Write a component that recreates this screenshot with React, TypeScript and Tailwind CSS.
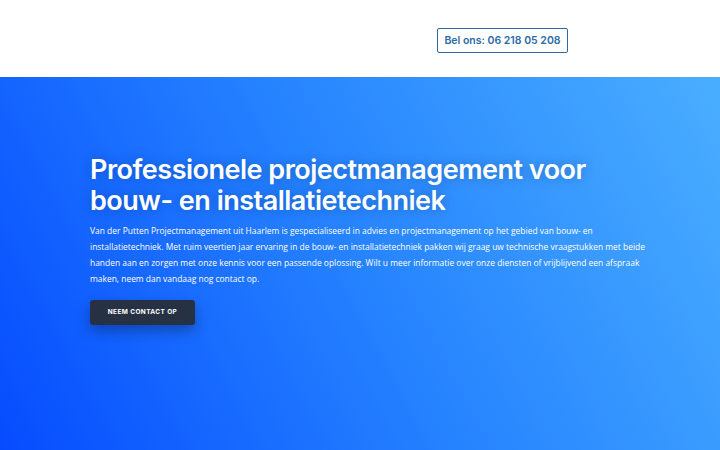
export default function App() {
  return (
    <div className="h-[450px] w-[720px] overflow-hidden bg-white">
      {/* Header */}
      <header className="flex h-[77px] items-start bg-white pt-[28px]">
        <a
          href="#"
          className="ml-[437px] flex h-[25px] w-[131px] items-center justify-center rounded-[2px] border-[1.5px] border-[#2b6aa6] text-[10.5px] font-semibold text-[#2b6aa6] [font-family:Inter,'Noto_Sans',sans-serif]"
        >
          Bel ons: 06 218 05 208
        </a>
      </header>

      {/* Hero */}
      <section className="h-[373px] bg-[linear-gradient(62deg,#064cff_0%,#2683ff_50%,#4aaeff_100%)] pl-[90px] pt-[77px]">
        <h1 className="w-[540px] text-[27px] font-semibold leading-[31px] tracking-[-0.5px] text-white [font-family:Inter,'Noto_Sans',sans-serif] [text-shadow:0_0_12px_rgba(0,0,0,0.25)]">
          Professionele projectmanagement voor
          <br />
          bouw- en installatietechniek
        </h1>
        <p className="mt-[7px] whitespace-nowrap text-[8.45px] leading-[16px] text-white [font-family:'Open_Sans',sans-serif]">
          Van der Putten Projectmanagement uit Haarlem is gespecialiseerd in advies en projectmanagement op het gebied van bouw- en
          <br />
          installatietechniek. Met ruim veertien jaar ervaring in de bouw- en installatietechniek pakken wij graag uw technische vraagstukken met beide
          <br />
          handen aan en zorgen met onze kennis voor een passende oplossing. Wilt u meer informatie over onze diensten of vrijblijvend een afspraak
          <br />
          maken, neem dan vandaag nog contact op.
        </p>
        <button className="mt-[13px] flex h-[25px] w-[105px] items-center justify-center rounded-[3px] bg-[#263244] text-[6.5px] font-bold tracking-[0.4px] text-white shadow-[0_6px_14px_rgba(0,0,0,0.3)] [font-family:Inter,'Noto_Sans',sans-serif]">
          NEEM CONTACT OP
        </button>
      </section>
    </div>
  );
}
